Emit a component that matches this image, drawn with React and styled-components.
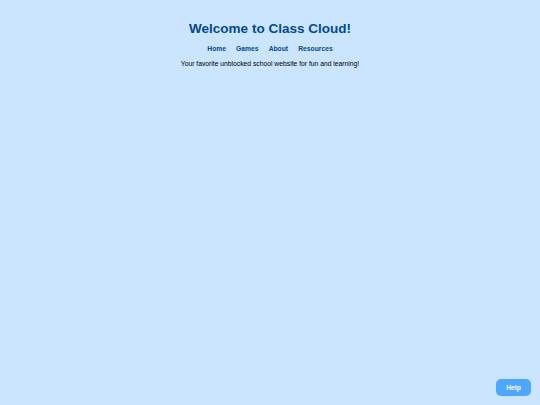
import React from "react";
import styled, { createGlobalStyle } from "styled-components";

const GlobalStyle = createGlobalStyle`
  html, body {
    margin: 0;
    padding: 0;
    background: #cce5ff;
    font-family: "Liberation Sans", Arial, sans-serif;
  }
`;

const Page = styled.div`
  min-height: 405px;
  display: flex;
  flex-direction: column;
  align-items: center;
  padding-top: 21px;
  box-sizing: border-box;
`;

const Title = styled.h1`
  margin: 0;
  font-size: 13.5px;
  line-height: 16px;
  font-weight: bold;
  color: #004a8f;
`;

const Nav = styled.nav`
  display: flex;
  gap: 10px;
  margin-top: 8px;
`;

const NavLink = styled.a`
  font-size: 6.75px;
  line-height: 8px;
  font-weight: bold;
  color: #004a8f;
  text-decoration: none;
`;

const Tagline = styled.p`
  margin: 7px 0 0;
  font-size: 6.75px;
  line-height: 8px;
  color: #000;
`;

const HelpButton = styled.button`
  position: fixed;
  right: 9px;
  bottom: 9px;
  width: 35px;
  height: 17px;
  border: none;
  border-radius: 5px;
  background: #4da6ff;
  color: #fff;
  font-family: "Liberation Sans", Arial, sans-serif;
  font-size: 6.75px;
  font-weight: bold;
  padding: 0;
  cursor: pointer;
`;

export default function App() {
  return (
    <>
      <GlobalStyle />
      <Page>
        <Title>Welcome to Class Cloud!</Title>
        <Nav>
          <NavLink href="#">Home</NavLink>
          <NavLink href="#">Games</NavLink>
          <NavLink href="#">About</NavLink>
          <NavLink href="#">Resources</NavLink>
        </Nav>
        <Tagline>Your favorite unblocked school website for fun and learning!</Tagline>
      </Page>
      <HelpButton>Help</HelpButton>
    </>
  );
}
